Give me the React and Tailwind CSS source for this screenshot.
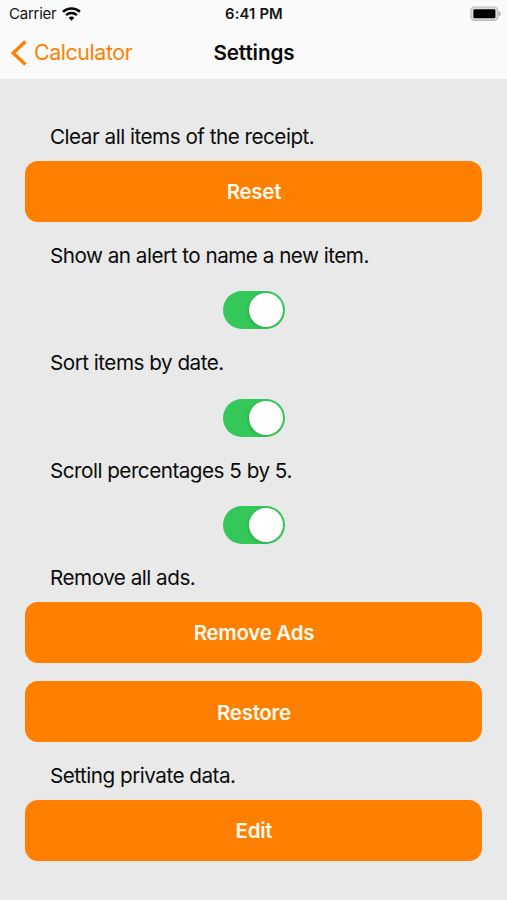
import React, { useState } from 'react';

const Label = ({ children }) => (
  <p className="h-7 pl-[24.6px] text-[20.7px] leading-7 tracking-[-0.51px] text-[#0c0c0c]">{children}</p>
);

const ActionButton = ({ children, className }) => (
  <button
    type="button"
    className={`block h-[61px] w-full rounded-[13px] bg-[#ff8000] pt-[2px] text-[20.5px] font-semibold tracking-[-0.3px] text-[#fffaf0] ${className}`}
  >
    {children}
  </button>
);

const Toggle = ({ checked, onChange }) => (
  <button
    type="button"
    role="switch"
    aria-checked={checked}
    onClick={() => onChange(!checked)}
    className={`mx-auto mt-[21.5px] mb-5 flex h-[38px] w-[62.5px] items-center rounded-full px-[2px] ${
      checked ? 'justify-end bg-[#34c759]' : 'justify-start bg-gray-300'
    }`}
  >
    <span className="size-[34px] rounded-full bg-white shadow-[-1px_1px_3px_rgba(0,0,0,0.15)]" />
  </button>
);

const WifiIcon = () => (
  <svg width="19" height="14" viewBox="0 0 19 14" fill="none" stroke="#0a0a0a" strokeWidth="2.4">
    <path d="M1 4.9C5.8 0.4 13.2 0.4 18 4.9" />
    <path d="M4.1 8.2C7.2 5.3 11.8 5.3 14.9 8.2" />
    <path d="M9.5 13.7L6.6 10.7C8.2 9.2 10.8 9.2 12.4 10.7Z" fill="#0a0a0a" stroke="none" />
  </svg>
);

const BatteryIcon = () => (
  <svg width="31" height="16" viewBox="0 0 31 16">
    <rect x="0.9" y="1" width="27" height="13.4" rx="3.8" fill="#dedede" stroke="#b9b9b9" strokeWidth="1.2" />
    <rect x="3.4" y="3.3" width="22" height="9" rx="1.2" fill="#000" />
    <path d="M28.8 5.2C31.3 6 31.3 9.4 28.8 10.2Z" fill="#adadad" />
  </svg>
);

const App = () => {
  const [showAlert, setShowAlert] = useState(true);
  const [sortByDate, setSortByDate] = useState(true);
  const [scrollByFive, setScrollByFive] = useState(true);

  return (
    <div className="h-[900px] w-[507px] overflow-hidden bg-[#e9e9e9] font-['Inter',sans-serif]">
      <header className="h-[79px] bg-[#fafafa]">
        {/* Status bar */}
        <div className="grid h-[27px] grid-cols-3 items-center pr-[6px] pl-[9px] text-[#141414]">
          <div className="flex items-center gap-[6px] text-[15px] tracking-[-0.25px]">
            <span className="pt-px">Carrier</span>
            <WifiIcon />
          </div>
          <span className="pt-px text-center text-[14.8px] font-semibold tracking-[0.15px] -ml-[2px]">6:41 PM</span>
          <div className="flex justify-end">
            <BatteryIcon />
          </div>
        </div>

        {/* Navigation */}
        <nav className="grid h-[52px] grid-cols-3 items-center px-[10px]">
          <button
            type="button"
            className="flex items-center gap-[7px] text-[21.4px] tracking-[-0.42px] text-[#ff8000]"
          >
            <svg width="17" height="28" viewBox="0 0 17 28" fill="none" stroke="currentColor" strokeWidth="3.4">
              <path d="M15.4 2.4L3.2 14L15.4 25.6" />
            </svg>
            <span className="pb-[2px]">Calculator</span>
          </button>
          <h1 className="pl-px text-center text-[20.7px] font-semibold tracking-[-0.1px] text-[#0a0a0a]">Settings</h1>
        </nav>
      </header>

      <main className="pt-[43.7px] pr-[24.6px] pl-[25.4px]">
        <Label>Clear all items of the receipt.</Label>
        <ActionButton className="mt-[10px] mb-5">Reset</ActionButton>

        <Label>Show an alert to name a new item.</Label>
        <Toggle checked={showAlert} onChange={setShowAlert} />

        <Label>Sort items by date.</Label>
        <Toggle checked={sortByDate} onChange={setSortByDate} />

        <Label>Scroll percentages 5 by 5.</Label>
        <Toggle checked={scrollByFive} onChange={setScrollByFive} />

        <Label>Remove all ads.</Label>
        <ActionButton className="mt-[9.8px] mb-[18.4px]">Remove Ads</ActionButton>
        <ActionButton className="mb-5">Restore</ActionButton>

        <Label>Setting private data.</Label>
        <ActionButton className="mt-[9.6px]">Edit</ActionButton>
      </main>
    </div>
  );
};

export default App;
